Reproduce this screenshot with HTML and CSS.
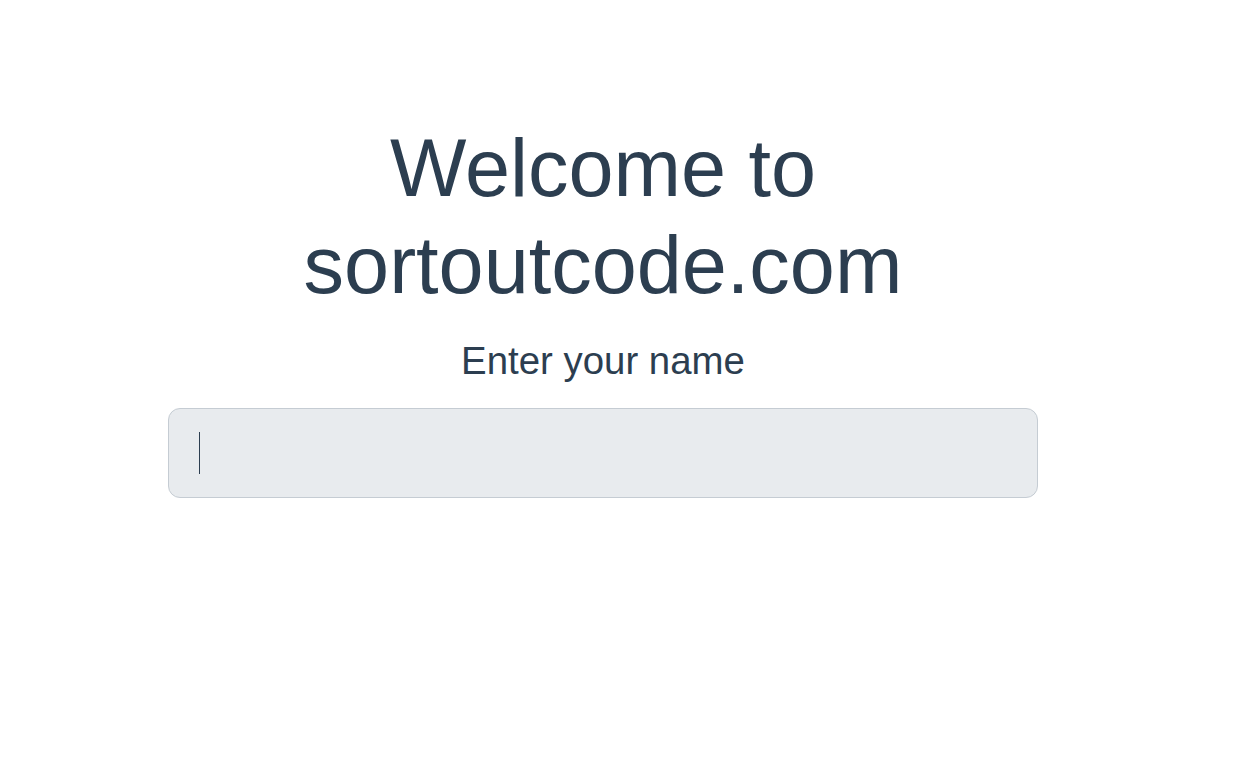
FILE: index.html
```html
<!DOCTYPE html>
<html lang="en">
<head>
<meta charset="utf-8">
<title>sortoutcode.com</title>
<link rel="stylesheet" href="styles.css">
</head>
<body>
  <main class="app">
    <h1 class="title">Welcome to sortoutcode.com</h1>
    <label class="label" for="name">Enter your name</label>
    <div class="field">
      <input id="name" class="input" type="text">
      <span class="caret"></span>
    </div>
  </main>
</body>
</html>
```

FILE: styles.css
```css
html, body {
  margin: 0;
  padding: 0;
  background: #ffffff;
}

body {
  font-family: "Liberation Sans", Arial, sans-serif;
  color: #2c3e50;
}

.app {
  width: 870px;
  margin-left: 168px;
  padding-top: 120px;
  display: flex;
  flex-direction: column;
  align-items: stretch;
  text-align: center;
}

.title {
  margin: 0;
  font-size: 81px;
  line-height: 97px;
  font-weight: 400;
  color: #2c3e50;
}

.label {
  display: block;
  margin-top: 25px;
  font-size: 38.4px;
  line-height: 44px;
  color: #2c3e50;
}

.field {
  position: relative;
  margin-top: 25px;
}

.input {
  display: block;
  box-sizing: border-box;
  width: 870px;
  height: 90px;
  margin: 0;
  padding: 0 30px;
  border: 1px solid #c5ccd3;
  border-radius: 12px;
  background: #e8ebee;
  font-family: "Liberation Sans", Arial, sans-serif;
  font-size: 36px;
  color: #2c3e50;
  caret-color: transparent;
  outline: none;
}

.caret {
  position: absolute;
  left: 31px;
  top: 24px;
  width: 1px;
  height: 42px;
  background: #2c3e50;
}
```
